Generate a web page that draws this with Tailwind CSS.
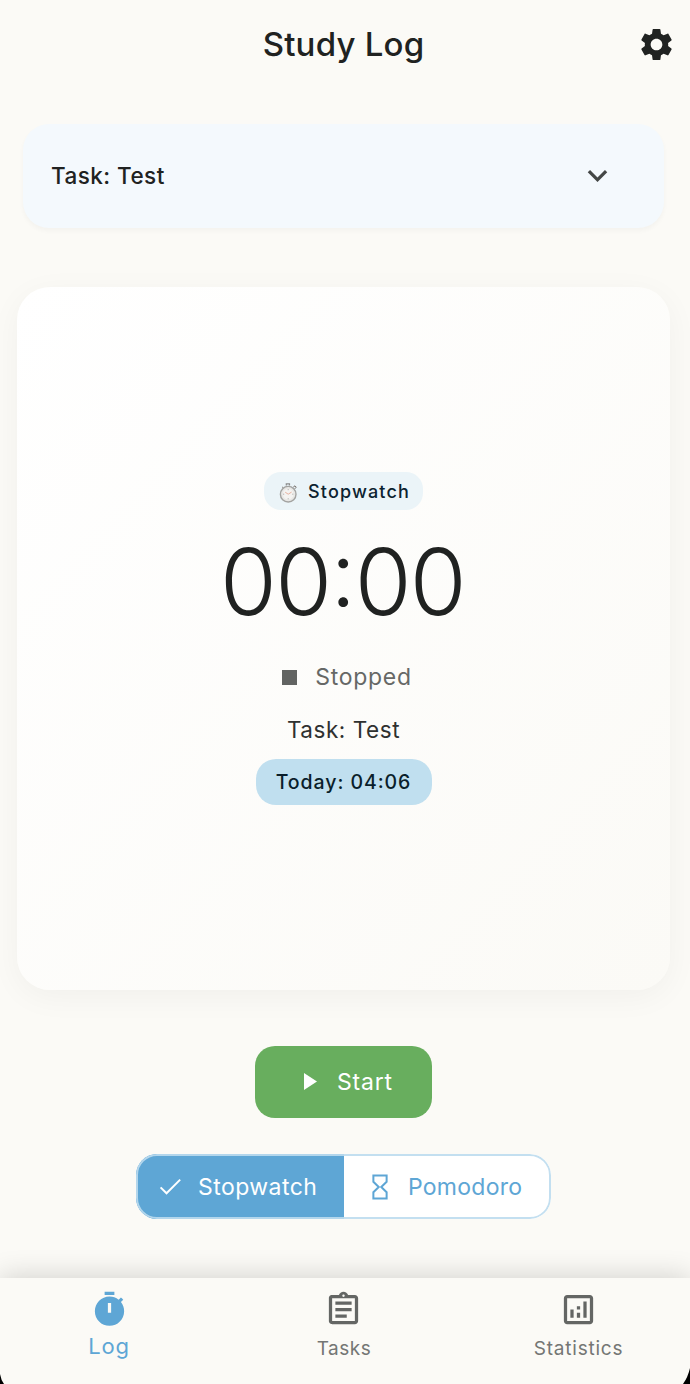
<!DOCTYPE html>
<html lang="en">
<head>
<meta charset="utf-8">
<meta name="viewport" content="width=device-width, initial-scale=1">
<title>Study Log</title>
<script src="https://cdn.jsdelivr.net/npm/@tailwindcss/browser@4"></script>
</head>
<body class="bg-black font-['Inter',sans-serif] text-[#202221]">
<div class="relative flex h-[1384px] w-[690px] flex-col overflow-hidden bg-[#fbfaf6]">
  <header class="grid h-[88px] shrink-0 grid-cols-[1fr_auto_1fr] items-center pr-[14px]">
    <span></span>
    <h1 class="pl-[11px] text-[33px] leading-[40px] font-medium tracking-[0.2px] whitespace-nowrap">Study Log</h1>
    <svg class="size-[39px] justify-self-end" viewBox="0 0 24 24" fill="#202221"><path d="M19.14 12.94c.04-.3.06-.61.06-.94 0-.32-.02-.64-.07-.94l2.03-1.58c.18-.14.23-.41.12-.61l-1.92-3.32c-.12-.22-.37-.29-.59-.22l-2.39.96c-.5-.38-1.03-.7-1.62-.94l-.36-2.54c-.04-.24-.24-.41-.48-.41h-3.84c-.24 0-.43.17-.47.41l-.36 2.54c-.59.24-1.13.57-1.62.94l-2.39-.96c-.22-.08-.47 0-.59.22L2.74 8.87c-.12.21-.08.47.12.61l2.03 1.58c-.05.3-.09.63-.09.94s.02.64.07.94l-2.03 1.58c-.18.14-.23.41-.12.61l1.92 3.32c.12.22.37.29.59.22l2.39-.96c.5.38 1.03.7 1.62.94l.36 2.54c.05.24.24.41.48.41h3.84c.24 0 .44-.17.47-.41l.36-2.54c.59-.24 1.13-.56 1.62-.94l2.39.96c.22.08.47 0 .59-.22l1.92-3.32c.12-.22.07-.47-.12-.61l-2.01-1.58zM12 15.6c-1.98 0-3.6-1.62-3.6-3.6s1.62-3.6 3.6-3.6 3.6 1.62 3.6 3.6-1.62 3.6-3.6 3.6z"/></svg>
  </header>

  <section class="mt-[36px] mr-[26px] ml-[23px] flex h-[104px] shrink-0 items-center justify-between rounded-[26px] bg-[#f4f9fd] pr-[47px] pl-[28px] shadow-[0_3px_5px_rgba(0,0,0,0.03)]">
    <span class="text-[22.5px] leading-[28px] font-medium tracking-[0.45px]">Task: Test</span>
    <svg class="mb-[2px] size-[39px]" viewBox="0 0 24 24" fill="#444746"><path d="M7.41 8.59 12 13.17l4.59-4.58L18 10l-6 6-6-6z"/></svg>
  </section>

  <main class="mt-[59px] mr-[20px] ml-[17px] flex h-[703px] shrink-0 flex-col items-center rounded-[33px] bg-linear-to-br from-white to-[#fbfaf6] pt-[185px] shadow-[0_7px_32px_rgba(0,0,0,0.045)]">
    <div class="flex h-[38px] w-[159px] items-center rounded-[17px] bg-[#ebf4f8] pl-[15px] text-[#0b2230]">
      <svg class="mt-[4px] mr-[10px] h-[20px] w-[19px] shrink-0" viewBox="0 0 19 20">
        <path d="M7.300 2.500V.8h3.200v1.700" fill="none" stroke="#8b8b8b" stroke-width="1.200"/>
        <path d="m14.200 4.200 1.800-1.400 1.200 1.400-1.500 1.700M4.600 5 3.200 4" fill="none" stroke="#77716c" stroke-width="1"/>
        <circle cx="9.200" cy="11.200" r="7.800" fill="#e8e8e6" stroke="#a3a3a1" stroke-width="1.400"/>
        <circle cx="9.200" cy="11.200" r="5.800" fill="#f4f3f1" stroke="#e6e5e3" stroke-width=".7"/>
        <path d="M9.200 6v1.200M9.200 15.200v1.200M4 11.200h1.200M13.200 11.200h1.200" stroke="#999" stroke-width=".7"/>
        <path d="m6.200 9.200 3 2 3.400-2.100" fill="none" stroke="#e2a08a" stroke-width=".8"/>
      </svg>
      <span class="mt-[2px] text-[18px] leading-[24px] font-medium tracking-[1.150px]">Stopwatch</span>
    </div>
    <div class="mt-[17px] mr-[2px] h-[110px] text-[92px] leading-[110px] font-light tracking-[-1.700px] whitespace-nowrap">00<span class="relative -top-[9px]">:</span>00</div>
    <div class="mt-[24px] flex h-[32px] items-center gap-[18px] pl-[7px] text-[#666866]">
      <span class="size-[15px] bg-[#626462]"></span>
      <span class="text-[23px] leading-[32px] tracking-[0.700px]">Stopped</span>
    </div>
    <div class="mt-[21px] text-[22.5px] leading-[32px] tracking-[0.550px] text-[#2f3130]">Task: Test</div>
    <div class="mt-[13px] flex h-[46px] w-[176px] items-center justify-center rounded-[20px] bg-[#c0dfef] pt-px text-[19.5px] font-medium tracking-[0.950px] whitespace-nowrap text-[#0a1e2b]"><span>Today: 04<span class="relative -top-px">:</span>06</span></div>
  </main>

  <button class="mt-[56px] mr-[3px] flex h-[72px] w-[177px] shrink-0 items-center self-center rounded-[20px] bg-[#68ae5e] pl-[49px] text-white">
    <svg class="mr-[20px] mb-px h-[17px] w-[13px]" viewBox="0 0 13 17" fill="white"><path d="M0 0v17l13-8.500z"/></svg>
    <span class="text-[23px] leading-[32px] tracking-[0.800px]">Start</span>
  </button>

  <div class="relative mt-[36px] mr-[3px] flex h-[65px] w-[415px] shrink-0 self-center overflow-hidden rounded-[21px] bg-white text-[23px] leading-[32px]">
    <button class="flex w-[208px] items-center bg-[#5ea6d5] pl-[20px] text-white">
      <svg class="mr-[13px] size-[29px]" viewBox="0 0 24 24" fill="none" stroke="currentColor" stroke-width="1.650"><path d="m3.800 12.700 4.900 4.900L20 6.300"/></svg>
      <span class="tracking-[0.450px]">Stopwatch</span>
    </button>
    <button class="flex flex-1 items-center pl-[21px] text-[#5ea6d5]">
      <svg class="mr-[13px] size-[30px]" viewBox="0 0 24 24" fill="none" stroke="currentColor" stroke-width="1.600"><path d="M6.700 2.800h10.600v5L13 12l4.300 4.200v5H6.700v-5L11 12 6.700 7.800z"/></svg>
      <span class="tracking-[0.250px]">Pomodoro</span>
    </button>
    <span class="pointer-events-none absolute inset-0 rounded-[21px] border-2 border-[#bcdcee]/90"></span>
  </div>

  <nav class="mt-auto grid h-[106px] shrink-0 grid-cols-3 bg-[#fbfaf6] pr-[3px] text-[#646664] shadow-[0_-2px_26px_rgba(0,0,0,0.160)]">
    <a class="-ml-[11px] flex flex-col items-center pt-[12px] text-[#5ea6d5]">
      <svg class="size-[39px]" viewBox="0 0 24 24" fill="currentColor"><path d="M9 1h6v2H9zm10.030 6.390 1.420-1.420c-.43-.51-.9-.99-1.410-1.410l-1.420 1.420C16.070 4.740 14.120 4 12 4c-4.970 0-9 4.030-9 9s4.020 9 9 9 9-4.030 9-9c0-2.120-.74-4.070-1.970-5.610zM13 14h-2V8h2v6z"/></svg>
      <span class="mt-px text-[22px] leading-[32px] tracking-[0.800px]">Log</span>
    </a>
    <a class="flex flex-col items-center pt-[12px]">
      <svg class="size-[39px]" viewBox="0 0 24 24" fill="currentColor"><path d="M7 15h7v2H7zm0-4h10v2H7zm0-4h10v2H7zm12-4h-4.180C14.400 1.840 13.300 1 12 1c-1.300 0-2.400.84-2.820 2H5c-.14 0-.27.01-.4.04-.39.08-.74.28-1.010.55-.18.18-.33.4-.43.64-.1.23-.16.490-.16.77v14c0 .27.060.54.16.78s.25.450.43.640c.27.270.62.470 1.010.550.13.020.26.030.4.030h14c1.100 0 2-.9 2-2V5c0-1.100-.9-2-2-2zm-7-.25c.41 0 .75.34.75.75s-.34.75-.75.75-.75-.34-.75-.75.34-.75.75-.75zM19 19H5V5h14v14z"/></svg>
      <span class="mt-[4px] pl-px text-[19px] leading-[32px] tracking-[0.500px] text-[#747674]">Tasks</span>
    </a>
    <a class="-mr-[12px] flex flex-col items-center pt-[12px]">
      <svg class="size-[39px]" viewBox="0 0 24 24" fill="currentColor"><path d="M19 3H5c-1.100 0-2 .9-2 2v14c0 1.100.9 2 2 2h14c1.100 0 2-.9 2-2V5c0-1.100-.9-2-2-2zm0 16H5V5h14v14zM7 12h2v5H7zm8-5h2v10h-2zm-4 7h2v3h-2zm0-4h2v2h-2z"/></svg>
      <span class="mt-[4px] text-[19px] leading-[32px] tracking-[0.800px] text-[#747674]">Statistics</span>
    </a>
  </nav>
  <svg class="absolute bottom-0 left-0 h-[12px] w-[4px]" viewBox="0 0 4 12"><path d="M0 2Q1 8 4 12H0z"/></svg>
  <svg class="absolute right-0 bottom-0 h-[16px] w-[7px]" viewBox="0 0 7 16"><path d="M7 0Q5 9 0 16H7z"/></svg>
</div>
</body>
</html>
